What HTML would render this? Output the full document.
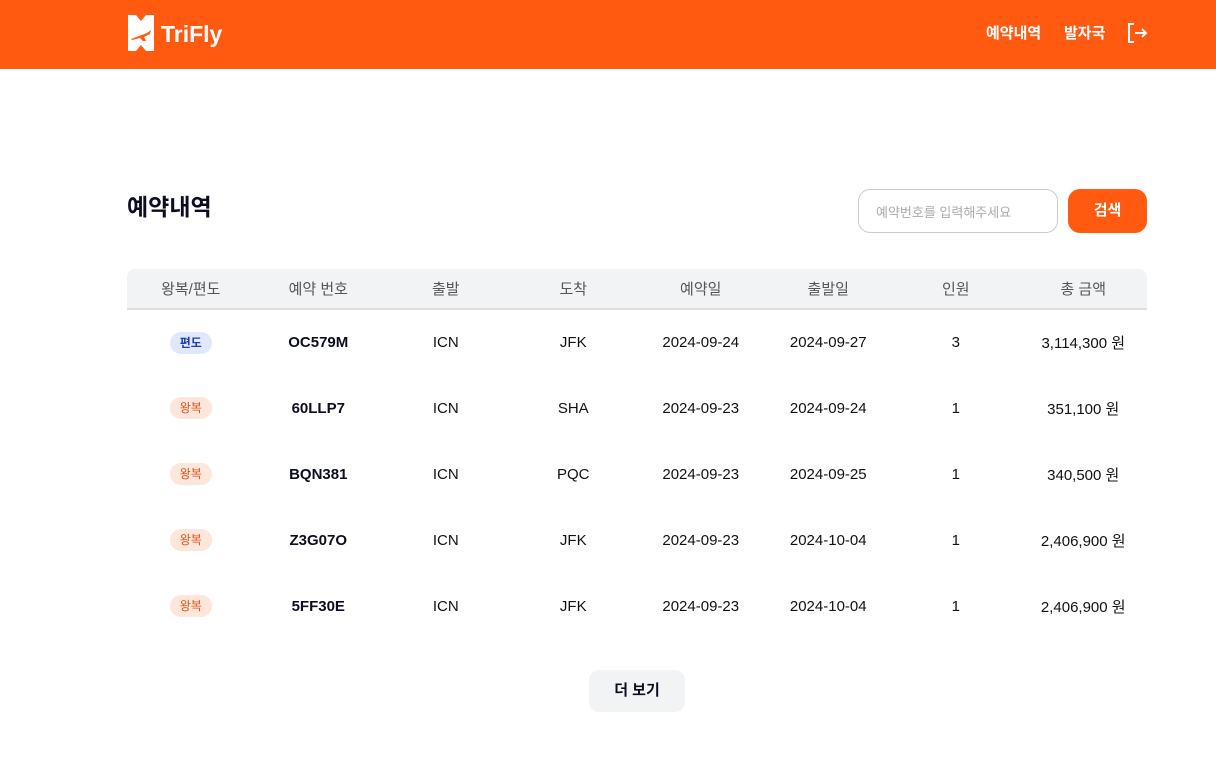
<!DOCTYPE html>
<html><head><meta charset="utf-8"><style>
*{margin:0;padding:0;box-sizing:border-box}
body{width:1216px;height:762px;background:#fff;font-family:"Liberation Sans","Noto Sans CJK KR",sans-serif;position:relative;overflow:hidden;color:#111}
.hdr{position:absolute;left:0;top:0;width:1216px;height:69px;background:#ff5a10}
.logo{position:absolute;left:128px;top:15px}
.logotxt{position:absolute;left:161px;top:21px;color:#fff;font-weight:bold;font-size:23px}
.nav{position:absolute;top:22px;color:#fff;font-weight:bold;font-size:15px}
h1{position:absolute;left:127px;top:188px;font-size:23px;font-weight:bold;color:#0d0d22}
.inp{position:absolute;left:858px;top:189px;width:200px;height:44px;border:1px solid #ccc;border-radius:12px;font-size:13px;color:#aaa;padding:12px 0 0 17px}
.btn{position:absolute;left:1068px;top:189px;width:79px;height:44px;background:#ff5a10;border-radius:12px;color:#fff;font-weight:bold;font-size:15px;text-align:center;line-height:44px}
table{position:absolute;left:127px;top:269px;width:1020px;border-collapse:collapse;table-layout:fixed}
th{height:40px;background:#f2f3f5;font-weight:normal;color:#555;font-size:15px;border-bottom:2px solid #ddd}
th:first-child{border-top-left-radius:8px}th:last-child{border-top-right-radius:8px}
td{height:66px;text-align:center;font-size:15px;color:#111}
td.b{font-weight:bold;color:#0d0d22}
.bd{display:inline-block;width:42px;height:22px;border-radius:11px;font-size:12px;line-height:22px;font-weight:bold}
.p{background:#dfe8fc;color:#1e3fa8}.w{background:#fde6da;color:#d9541a;font-weight:normal}
.more{position:absolute;left:589px;top:670px;width:96px;height:42px;background:#f2f3f5;border-radius:10px;text-align:center;line-height:42px;font-weight:bold;font-size:15px;color:#0d0d22}
</style></head><body>
<div class="hdr">
<svg class="logo" width="26" height="36" viewBox="0 0 26 36"><path d="M0 0h8l5 6 5-6h8v36h-8l-5-6-5 6H0z" fill="#fff"/><path d="M3 24l16-6 4-3-1 4-6 3 2 4-3 0-3-3-8 2z" fill="#ff5a10"/></svg>
<div class="logotxt">TriFly</div>
<div class="nav" style="left:986px">예약내역</div>
<div class="nav" style="left:1064px">발자국</div>
<svg style="position:absolute;left:1126px;top:22px" width="22" height="22" viewBox="0 0 22 22" fill="none" stroke="#fff" stroke-width="2"><path d="M8 2H3v18h5"/><path d="M9 11h11M16 7l4 4-4 4"/></svg>
</div>
<h1>예약내역</h1>
<div class="inp">예약번호를 입력해주세요</div>
<div class="btn">검색</div>
<table>
<tr><th>왕복/편도</th><th>예약 번호</th><th>출발</th><th>도착</th><th>예약일</th><th>출발일</th><th>인원</th><th>총 금액</th></tr>
<tr><td><span class="bd p">편도</span></td><td class="b">OC579M</td><td>ICN</td><td>JFK</td><td>2024-09-24</td><td>2024-09-27</td><td>3</td><td>3,114,300 원</td></tr>
<tr><td><span class="bd w">왕복</span></td><td class="b">60LLP7</td><td>ICN</td><td>SHA</td><td>2024-09-23</td><td>2024-09-24</td><td>1</td><td>351,100 원</td></tr>
<tr><td><span class="bd w">왕복</span></td><td class="b">BQN381</td><td>ICN</td><td>PQC</td><td>2024-09-23</td><td>2024-09-25</td><td>1</td><td>340,500 원</td></tr>
<tr><td><span class="bd w">왕복</span></td><td class="b">Z3G07O</td><td>ICN</td><td>JFK</td><td>2024-09-23</td><td>2024-10-04</td><td>1</td><td>2,406,900 원</td></tr>
<tr><td><span class="bd w">왕복</span></td><td class="b">5FF30E</td><td>ICN</td><td>JFK</td><td>2024-09-23</td><td>2024-10-04</td><td>1</td><td>2,406,900 원</td></tr>
</table>
<div class="more">더 보기</div>
</body></html>
